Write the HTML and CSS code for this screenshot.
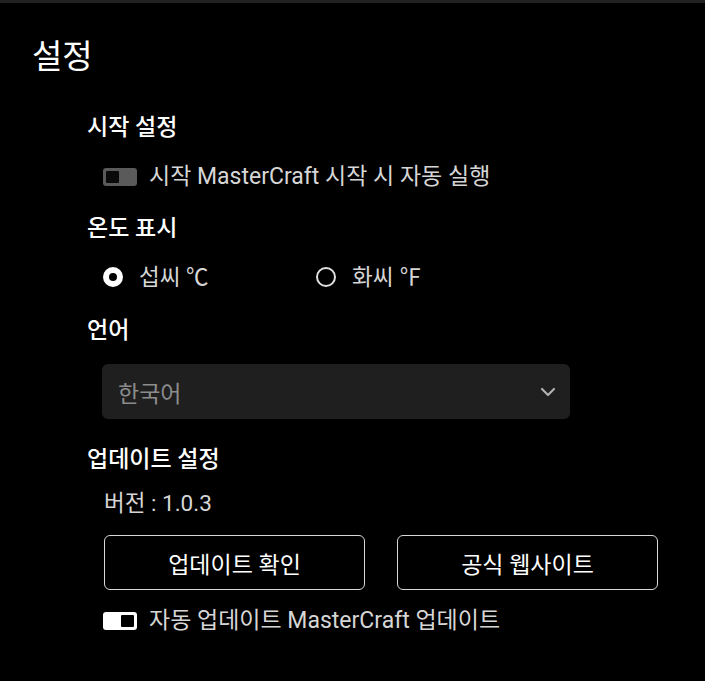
FILE: index.html
```html
<!DOCTYPE html>
<html lang="ko">
<head>
<meta charset="utf-8">
<title>설정</title>
<link rel="stylesheet" href="styles.css">
</head>
<body>
<div class="topbar"></div>
<h1 class="title">설정</h1>
<div class="content">
  <h2 class="heading h-start">시작 설정</h2>
  <div class="row toggle-row r-start">
    <span class="toggle off"><span class="knob"></span></span>
    <span class="label label-wide">시작 MasterCraft 시작 시 자동 실행</span>
  </div>

  <h2 class="heading h-temp">온도 표시</h2>
  <div class="row radio-row">
    <div class="radio-opt">
      <span class="radio checked"></span>
      <span class="label">섭씨 ℃</span>
    </div>
    <div class="radio-opt">
      <span class="radio"></span>
      <span class="label">화씨 ℉</span>
    </div>
  </div>

  <h2 class="heading h-lang">언어</h2>
  <div class="select">
    <span class="select-text">한국어</span>
    <svg class="chevron" width="16" height="10" viewBox="0 0 16 10"><path d="M2 2 L8 8 L14 2" fill="none" stroke="#b0b0b0" stroke-width="2.2" stroke-linecap="round" stroke-linejoin="round"/></svg>
  </div>

  <h2 class="heading h-update">업데이트 설정</h2>
  <div class="version">버전 : 1.0.3</div>
  <div class="buttons">
    <button class="btn">업데이트 확인</button>
    <button class="btn">공식 웹사이트</button>
  </div>
  <div class="row toggle-row r-auto">
    <span class="toggle on"><span class="knob"></span></span>
    <span class="label label-wide">자동 업데이트 MasterCraft 업데이트</span>
  </div>
</div>
</body>
</html>
```
FILE: styles.css
```css
* { box-sizing: border-box; }
html, body {
  margin: 0;
  padding: 0;
  background: #000;
  color: #fff;
  font-family: Roboto, "Noto Sans CJK KR", sans-serif;
  height: 100%;
}
.topbar {
  height: 3px;
  background: #222;
}
.title {
  margin: 0;
  padding: 34px 0 0 32px;
  font-size: 33px;
  line-height: 40px;
  font-weight: 400;
  color: #fff;
}
.content {
  padding-left: 87px;
  display: flex;
  flex-direction: column;
  align-items: flex-start;
}
.heading {
  margin: 0;
  font-size: 23px;
  line-height: 30px;
  font-weight: 500;
  color: #fff;
}
.h-start { margin-top: 36px; }
.h-temp { margin-top: 22px; }
.h-lang { margin-top: 24px; }
.h-update { margin-top: 26px; }

.row {
  display: flex;
  align-items: center;
  height: 30px;
  padding-left: 16px;
}
.label {
  font-size: 22.5px;
  line-height: 30px;
  color: #d6d6d6;
}
.label-wide { font-size: 23px; }
.r-start { margin-top: 19px; }
.r-auto { margin-top: 16px; }

.toggle {
  position: relative;
  width: 34px;
  height: 18px;
  border-radius: 3px;
  margin-right: 12px;
  display: flex;
  align-items: center;
  padding: 0 3px;
}
.toggle .knob {
  width: 13px;
  height: 12px;
  background: #000;
  border-radius: 1px;
}
.toggle.off { background: #5a5a5a; justify-content: flex-start; }
.toggle.off .knob { background: #0a0a0a; }
.toggle.on { background: #fff; justify-content: flex-end; }

.radio-row { margin-top: 18px; }
.radio-opt {
  display: flex;
  align-items: center;
  width: 213px;
}
.radio {
  width: 20px;
  height: 20px;
  border-radius: 50%;
  border: 2px solid #e0e0e0;
  margin-right: 16px;
}
.radio.checked {
  border: 6px solid #fff;
}

.select {
  margin-top: 18px;
  margin-left: 15px;
  width: 468px;
  height: 55px;
  background: #1f1f1f;
  border-radius: 6px;
  display: flex;
  align-items: center;
  justify-content: space-between;
  padding: 0 14px 0 16px;
}
.select-text {
  font-size: 23px;
  color: #8c8c8c;
}

.version {
  margin-top: 13px;
  margin-left: 17px;
  font-size: 22.5px;
  line-height: 30px;
  color: #d6d6d6;
}
.buttons {
  margin-top: 17px;
  margin-left: 17px;
  display: flex;
  gap: 32px;
}
.btn {
  width: 261px;
  height: 55px;
  background: #000;
  border: 1.5px solid #d8d8d8;
  border-radius: 6px;
  color: #fff;
  font-family: Roboto, "Noto Sans CJK KR", sans-serif;
  font-size: 23px;
  font-weight: 400;
  cursor: pointer;
}
```
